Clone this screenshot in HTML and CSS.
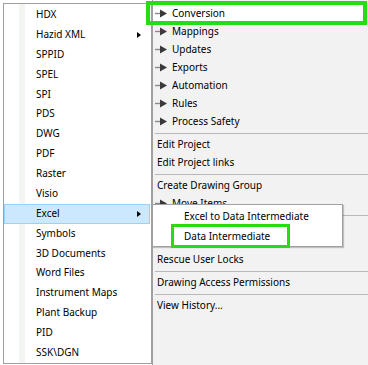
FILE: index.html
```html
<!DOCTYPE html>
<html lang="en">

<head>
    <meta charset="UTF-8">
    <meta name="viewport" content="width=device-width, initial-scale=1.0">
    <title>Project Context Menu</title>
    <link rel="stylesheet" href="styles.css">
</head>

<body>

    <div class="screen">
        <ul class="menu">
            <li class="menu-item">HDX</li>
            <li class="menu-item has-sub">Hazid XML</li>
            <li class="menu-item">SPPID</li>
            <li class="menu-item">SPEL</li>
            <li class="menu-item">SPI</li>
            <li class="menu-item">PDS</li>
            <li class="menu-item">DWG</li>
            <li class="menu-item">PDF</li>
            <li class="menu-item">Raster</li>
            <li class="menu-item">Visio</li>
            <li class="menu-item has-sub active">Excel</li>
            <li class="menu-item">Symbols</li>
            <li class="menu-item">3D Documents</li>
            <li class="menu-item">Word Files</li>
            <li class="menu-item">Instrument Maps</li>
            <li class="menu-item">Plant Backup</li>
            <li class="menu-item">PID</li>
            <li class="menu-item">SSK\DGN</li>
        </ul>

        <div class="panel">
            <ul class="panel-list">
                <li class="panel-item branch hover">
                    <svg class="node" viewBox="0 0 12 9"><path d="M0 4.5H5" /><polygon points="5,0.5 12,4.5 5,8.5" /></svg>Conversion
                </li>
                <li class="panel-item branch">
                    <svg class="node" viewBox="0 0 12 9"><path d="M0 4.5H5" /><polygon points="5,0.5 12,4.5 5,8.5" /></svg>Mappings
                </li>
                <li class="panel-item branch">
                    <svg class="node" viewBox="0 0 12 9"><path d="M0 4.5H5" /><polygon points="5,0.5 12,4.5 5,8.5" /></svg>Updates
                </li>
                <li class="panel-item branch">
                    <svg class="node" viewBox="0 0 12 9"><path d="M0 4.5H5" /><polygon points="5,0.5 12,4.5 5,8.5" /></svg>Exports
                </li>
                <li class="panel-item branch">
                    <svg class="node" viewBox="0 0 12 9"><path d="M0 4.5H5" /><polygon points="5,0.5 12,4.5 5,8.5" /></svg>Automation
                </li>
                <li class="panel-item branch">
                    <svg class="node" viewBox="0 0 12 9"><path d="M0 4.5H5" /><polygon points="5,0.5 12,4.5 5,8.5" /></svg>Rules
                </li>
                <li class="panel-item branch">
                    <svg class="node" viewBox="0 0 12 9"><path d="M0 4.5H5" /><polygon points="5,0.5 12,4.5 5,8.5" /></svg>Process Safety
                </li>
                <li class="panel-sep"></li>
                <li class="panel-item">Edit Project</li>
                <li class="panel-item">Edit Project links</li>
                <li class="panel-sep"></li>
                <li class="panel-item">Create Drawing Group</li>
                <li class="panel-item branch">
                    <svg class="node" viewBox="0 0 12 9"><path d="M0 4.5H5" /><polygon points="5,0.5 12,4.5 5,8.5" /></svg>Move Items
                </li>
                <li class="panel-sep"></li>
                <!-- rows under the Excel submenu -->
                <li class="panel-gap"></li>
                <li class="panel-item">Rescue User Locks</li>
                <li class="panel-sep"></li>
                <li class="panel-item">Drawing Access Permissions</li>
                <li class="panel-sep"></li>
                <li class="panel-item">View History...</li>
            </ul>
        </div>

        <!-- Excel flyout -->
        <ul class="submenu">
            <li class="submenu-item">Excel to Data Intermediate</li>
            <li class="submenu-item">Data Intermediate</li>
        </ul>

        <!-- green call-outs -->
        <div class="mark mark-conversion"></div>
        <div class="mark mark-data"></div>
    </div>

</body>

</html>
```

FILE: styles.css
```css
* {
    margin: 0;
    padding: 0;
    box-sizing: border-box;
}

body {
    font-family: "Noto Sans", "Open Sans", sans-serif;
    font-size: 10px;
    color: #000;
    background-color: #fff;
    overflow: hidden;
}

ul {
    list-style: none;
}

.screen {
    position: relative;
    display: flex;
    align-items: flex-start;
    width: 368px;
    height: 365px;
    overflow: hidden;
}

/* left popup menu */
.menu {
    width: 149px;
    margin: 3px 0 0 3px;
    padding-top: 1px;
    border: 1px solid #a0a0a0;
    background: linear-gradient(to right, #fff 15px, #f2f5f0 15px, #f2f5f0 21px, #fff 21px);
}

.menu-item {
    position: relative;
    height: 19.875px;
    line-height: 19.875px;
    padding-left: 32px;
    margin-right: 1px;
    white-space: nowrap;
}

.menu-item.active {
    background-color: #cce8ff;
    box-shadow: inset 0 0 0 1px #99d1ff;
}

.menu-item.has-sub::after {
    content: "";
    position: absolute;
    right: 9px;
    top: 50%;
    transform: translateY(-50%);
    border-left: 4px solid #000;
    border-top: 3.5px solid transparent;
    border-bottom: 3.5px solid transparent;
}

/* context panel behind */
.panel {
    flex: 1;
    align-self: stretch;
    border-left: 1px solid #a0a0a0;
    background-color: #f2f2f2;
    padding-top: 4px;
}

.panel-item {
    display: flex;
    align-items: center;
    height: 18px;
    padding-left: 4px;
    white-space: nowrap;
}

.panel-item.branch {
    padding-left: 2px;
}

.panel-item.hover {
    background-color: #fff;
}

.node {
    width: 12px;
    height: 9px;
    margin-right: 5px;
    flex: 0 0 auto;
}

.node path {
    stroke: #8a8a8a;
    stroke-width: 1.4;
}

.node polygon {
    fill: #3a3a3a;
}

.panel-sep {
    height: 1px;
    margin: 3px 0 1px 2px;
    background-color: #b8b8b8;
}

.panel-gap {
    height: 33px;
}

/* Excel flyout */
.submenu {
    position: absolute;
    left: 152px;
    top: 204px;
    width: 191px;
    height: 43px;
    padding-top: 1px;
    border: 1px solid #a0a0a0;
    background-color: #fff;
    box-shadow: 1px 1px 1px rgba(0, 0, 0, 0.2);
}

.submenu-item {
    height: 20px;
    line-height: 20px;
    padding-left: 31px;
    white-space: nowrap;
}

/* annotation boxes */
.mark {
    position: absolute;
    border: 4px solid #26dc12;
}

.mark-conversion {
    left: 146px;
    top: 1px;
    width: 221px;
    height: 24px;
}

.mark-data {
    left: 171px;
    top: 224px;
    width: 119px;
    height: 24px;
    border-width: 3px;
}
```
